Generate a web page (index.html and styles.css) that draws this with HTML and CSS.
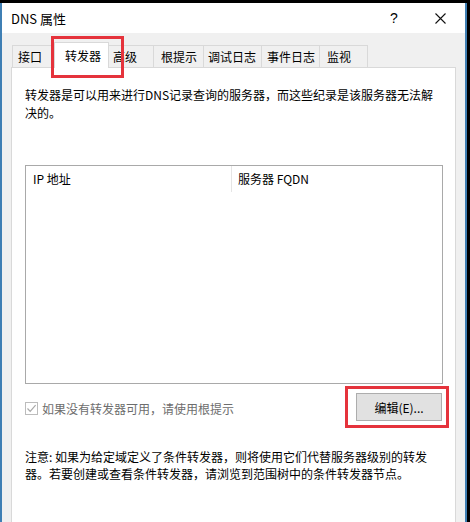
FILE: index.html
```html
<!DOCTYPE html>
<html lang="zh-CN">
<head>
    <meta charset="UTF-8">
    <title>DNS 属性</title>
    <link rel="stylesheet" href="styles.css">
</head>
<body>
    <div class="window">
        <div class="titlebar">
            <span class="title">DNS 属性</span>
            <span class="help">?</span>
            <span class="close">
                <svg width="11" height="11" viewBox="0 0 11 11">
                    <path d="M0.5 0.5 L10.5 10.5 M10.5 0.5 L0.5 10.5" stroke="#111" stroke-width="1.1" fill="none"/>
                </svg>
            </span>
        </div>

        <div class="tabs">
            <div class="tab t1">接口</div>
            <div class="tab t2 active">转发器</div>
            <div class="tab t3">高级</div>
            <div class="tab t4">根提示</div>
            <div class="tab t5">调试日志</div>
            <div class="tab t6">事件日志</div>
            <div class="tab t7">监视</div>
        </div>

        <div class="panel">
            <p class="intro">转发器是可以用来进行DNS记录查询的服务器，而这些纪录是该服务器无法解决的。</p>

            <div class="listbox">
                <div class="list-head">
                    <div class="col col-ip">IP 地址</div>
                    <div class="col col-fqdn">服务器 FQDN</div>
                </div>
            </div>

            <div class="action-row">
                <label class="check disabled">
                    <span class="box">
                        <svg width="11" height="11" viewBox="0 0 11 11">
                            <path d="M1.5 5.5 L4.2 8.3 L9.6 2.2" stroke="#a8a8a8" stroke-width="1.2" fill="none"/>
                        </svg>
                    </span>
                    如果没有转发器可用，请使用根提示
                </label>
                <button class="btn">编辑(E)...</button>
            </div>

            <p class="note">注意: 如果为给定域定义了条件转发器，则将使用它们代替服务器级别的转发器。若要创建或查看条件转发器，请浏览到范围树中的条件转发器节点。</p>
        </div>
    </div>

    <!-- 标注框 -->
    <div class="mark mark-tab"></div>
    <div class="mark mark-btn"></div>
</body>
</html>
```

FILE: styles.css
```css
body {
    margin: 0;
    background: #000;
    font-family: "Noto Sans CJK SC", "Noto Sans", sans-serif;
    font-size: 12px;
    color: #000;
    overflow: hidden;
}
.window {
    margin: 3px 3px 0 0;
    height: 519px;
    background: #f0f0f0;
    border-left: 2px solid #3f7fb4;
    border-right: 2px solid #3f7fb4;
    box-sizing: border-box;
    display: flex;
    flex-direction: column;
}
.titlebar {
    height: 30px;
    background: #fff;
    display: flex;
    align-items: center;
    font-size: 13px;
    flex-shrink: 0;
}
.title {
    padding-left: 9px;
    flex: 1;
}
.help {
    width: 8px;
    font-family: "Liberation Sans", sans-serif;
    font-size: 14px;
    margin-right: 37px;
}
.close {
    display: flex;
    margin-right: 19px;
}
.tabs {
    display: flex;
    align-items: flex-end;
    height: 34px;
    padding-left: 10px;
    flex-shrink: 0;
}
.tab {
    height: 22px;
    line-height: 22px;
    box-sizing: border-box;
    border: 1px solid #d9d9d9;
    border-bottom: none;
    border-left: none;
    background: #f0f0f0;
}
.tab.t1 { width: 42px; padding-left: 5px; border-left: 1px solid #d9d9d9; }
.tab.t3 { width: 45px; padding-left: 4px; }
.tab.t4 { width: 50px; padding-left: 7px; }
.tab.t5 { width: 58px; padding-left: 4px; }
.tab.t6 { width: 58px; padding-left: 5px; }
.tab.t7 { width: 48px; padding-left: 7px; }
.tab.active {
    width: 55px;
    height: 26px;
    line-height: 26px;
    padding-left: 10px;
    margin-bottom: -1px;
    background: #fff;
    border-left: 1px solid #d9d9d9;
    position: relative;
    z-index: 1;
}
.panel {
    flex: 1;
    margin: 0 9px;
    background: #fff;
    border: 1px solid #d9d9d9;
    border-bottom: none;
    padding: 0 13px;
}
.intro {
    margin: 18px 0 0;
    line-height: 18px;
}
.listbox {
    margin-top: 43px;
    width: 418px;
    height: 219px;
    box-sizing: border-box;
    border: 1px solid #a9a9a9;
}
.list-head {
    display: flex;
    height: 26px;
    line-height: 26px;
}
.col-ip {
    width: 206px;
    padding-left: 7px;
    box-sizing: border-box;
    border-right: 1px solid #e5e5e5;
}
.col-fqdn {
    padding-left: 6px;
}
.action-row {
    width: 417px;
    margin-top: 9px;
    display: flex;
    justify-content: space-between;
    align-items: center;
}
.check {
    display: flex;
    align-items: center;
    gap: 4px;
    color: #6d6d6d;
    margin-top: 3px;
}
.box {
    width: 11px;
    height: 11px;
    border: 1px solid #bcbcbc;
    display: flex;
}
.btn {
    width: 86px;
    height: 28px;
    background: #e1e1e1;
    border: 1px solid #adadad;
    font-family: inherit;
    font-size: 12px;
    color: #000;
    padding: 0;
}
.note {
    margin: 27px 0 0;
    line-height: 17px;
}
.mark {
    position: absolute;
    border: 3px solid #e5333c;
    box-sizing: border-box;
}
.mark-tab {
    left: 51px;
    top: 36px;
    width: 73px;
    height: 42px;
}
.mark-btn {
    left: 345px;
    top: 386px;
    width: 104px;
    height: 42px;
}
```
